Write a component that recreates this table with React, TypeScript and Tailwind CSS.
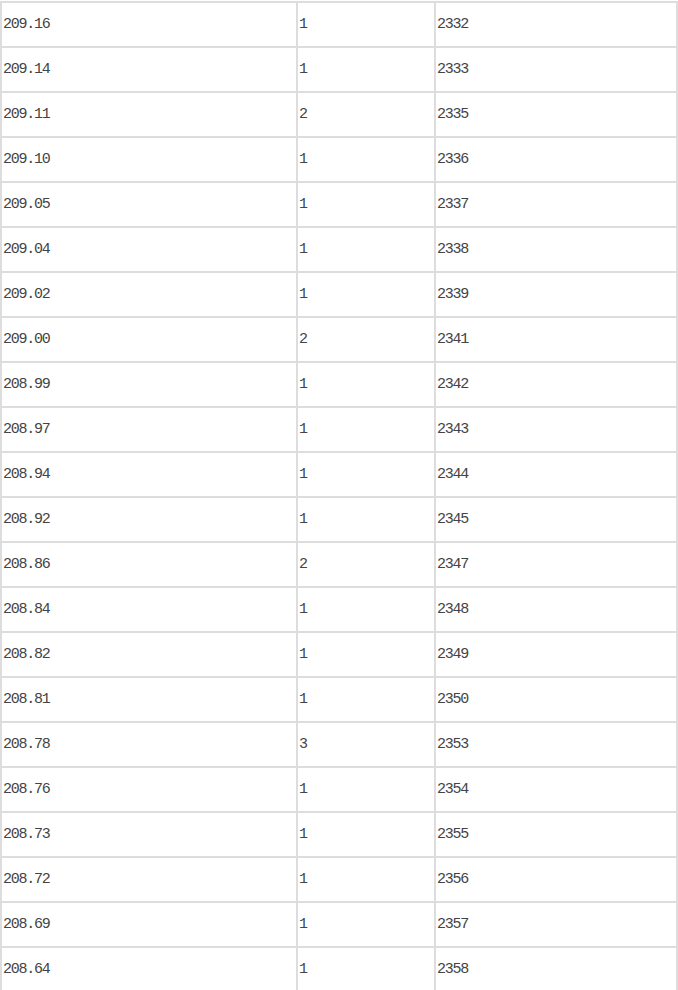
import React from 'react';

// 价格 / 数量 / 累计 明细表
const rows: [string, string, string][] = [
  ['209.16', '1', '2332'],
  ['209.14', '1', '2333'],
  ['209.11', '2', '2335'],
  ['209.10', '1', '2336'],
  ['209.05', '1', '2337'],
  ['209.04', '1', '2338'],
  ['209.02', '1', '2339'],
  ['209.00', '2', '2341'],
  ['208.99', '1', '2342'],
  ['208.97', '1', '2343'],
  ['208.94', '1', '2344'],
  ['208.92', '1', '2345'],
  ['208.86', '2', '2347'],
  ['208.84', '1', '2348'],
  ['208.82', '1', '2349'],
  ['208.81', '1', '2350'],
  ['208.78', '3', '2353'],
  ['208.76', '1', '2354'],
  ['208.73', '1', '2355'],
  ['208.72', '1', '2356'],
  ['208.69', '1', '2357'],
  ['208.64', '1', '2358'],
];

const cell =
  'h-[45px] border border-[#dddddd] pl-px align-middle text-left font-normal';

const App: React.FC = () => {
  return (
    <div className="w-[678px] h-[990px] overflow-hidden bg-white pt-px">
      <table
        className="w-[678px] table-fixed border-separate border-spacing-0 border border-[#dddddd] text-[15px] leading-none tracking-[-1.25px] text-[#444444]"
        style={{ fontFamily: '"Liberation Mono", "Noto Sans CJK SC", monospace' }}
      >
        <colgroup>
          <col className="w-[296px]" />
          <col className="w-[138px]" />
          <col className="w-[242px]" />
        </colgroup>
        <tbody>
          {rows.map(([price, qty, total]) => (
            <tr key={total}>
              <td className={cell}>{price}</td>
              <td className={cell}>{qty}</td>
              <td className={cell}>{total}</td>
            </tr>
          ))}
        </tbody>
      </table>
    </div>
  );
};

export default App;
